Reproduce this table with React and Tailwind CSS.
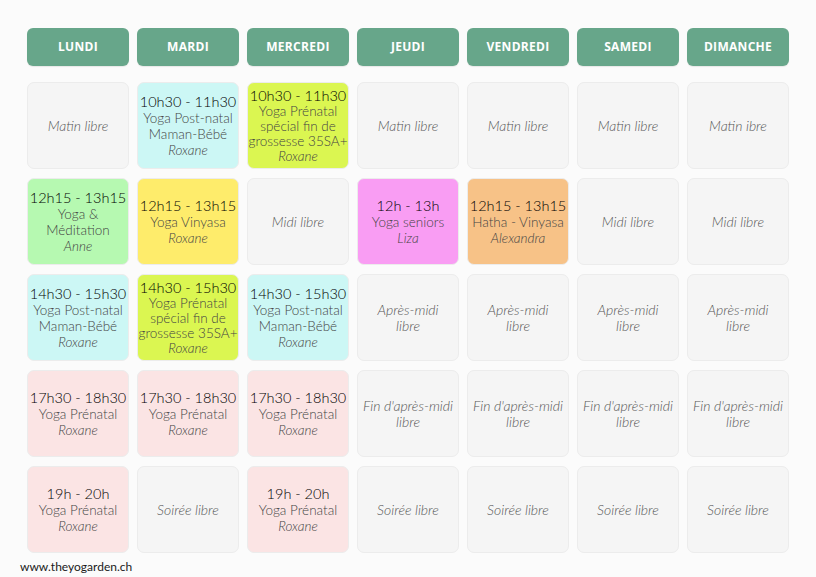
const DAYS = ["LUNDI", "MARDI", "MERCREDI", "JEUDI", "VENDREDI", "SAMEDI", "DIMANCHE"];

const free = (...t) => ({ free: t });

const cyanPost = (t) => ({ bg: "bg-[#ccf7f5]", time: t, lines: ["Yoga Post-natal", "Maman-Bébé"], who: "Roxane" });
const limePre = (t) => ({ bg: "bg-[#dbf651]", time: t, lines: ["Yoga Prénatal", "spécial fin de", "grossesse 35SA+"], who: "Roxane", tight: true });
const pinkPre = (t) => ({ bg: "bg-[#fbe4e4]", time: t, lines: ["Yoga Prénatal"], who: "Roxane" });

const AM = () => free("Après-midi", "libre");
const FAM = () => free("Fin d'après-midi", "libre");

const ROWS = [
  [free("Matin libre"), cyanPost("10h30 - 11h30"), limePre("10h30 - 11h30"), free("Matin libre"), free("Matin libre"), free("Matin libre"), free("Matin ibre")],
  [
    { bg: "bg-[#b6f9b1]", time: "12h15 - 13h15", lines: ["Yoga &", "Méditation"], who: "Anne" },
    { bg: "bg-[#feec6b]", time: "12h15 - 13h15", lines: ["Yoga Vinyasa"], who: "Roxane" },
    free("Midi libre"),
    { bg: "bg-[#f99df3]", time: "12h - 13h", lines: ["Yoga seniors"], who: "Liza" },
    { bg: "bg-[#f7c287]", time: "12h15 - 13h15", lines: ["Hatha - Vinyasa"], who: "Alexandra" },
    free("Midi libre"),
    free("Midi libre"),
  ],
  [cyanPost("14h30 - 15h30"), limePre("14h30 - 15h30"), cyanPost("14h30 - 15h30"), AM(), AM(), AM(), AM()],
  [pinkPre("17h30 - 18h30"), pinkPre("17h30 - 18h30"), pinkPre("17h30 - 18h30"), FAM(), FAM(), FAM(), FAM()],
  [pinkPre("19h - 20h"), free("Soirée libre"), pinkPre("19h - 20h"), free("Soirée libre"), free("Soirée libre"), free("Soirée libre"), free("Soirée libre")],
];

function Cell({ c }) {
  if (c.free) {
    return (
      <div className="h-[87px] rounded-[7px] bg-[#f5f5f5] border border-[#ececec] flex flex-col items-center justify-center text-center">
        {c.free.map((l) => (
          <span key={l} className="whitespace-nowrap italic font-light text-[14px] leading-[16px] text-[#555]">{l}</span>
        ))}
      </div>
    );
  }
  const lh = c.tight ? "leading-[15px]" : "leading-[16px]";
  return (
    <div className={`h-[87px] rounded-[7px] border border-[#ececec] flex flex-col items-center justify-center text-center ${c.bg}`}>
      <div className="whitespace-nowrap text-[14.5px] leading-[17px] text-black font-light">{c.time}</div>
      {c.lines.map((l) => (
        <div key={l} className={`whitespace-nowrap font-light text-[13.5px] text-[#444] ${lh}`}>{l}</div>
      ))}
      <div className={`italic font-light text-[13.5px] text-[#444] ${lh}`}>{c.who}</div>
    </div>
  );
}

export default function App() {
  return (
    <div className="w-[816px] h-[577px] bg-[#fbfbfb] font-['Lato',sans-serif] relative overflow-hidden">
      <div className="ml-[27px] pt-[28px] w-[762px]">
        <div className="grid grid-cols-7 gap-x-[8px]">
          {DAYS.map((d) => (
            <div key={d} className="h-[38px] rounded-[6px] bg-[#67a68a] flex items-center justify-center shadow-[0_1px_1px_rgba(0,0,0,0.08)]">
              <span className="text-white text-[12px] font-bold tracking-[0.3px] font-['Open_Sans',sans-serif]">{d}</span>
            </div>
          ))}
        </div>
        <div className="mt-[16px] grid grid-cols-7 gap-x-[8px] gap-y-[9px]">
          {ROWS.flat().map((c, i) => (
            <Cell key={i} c={c} />
          ))}
        </div>
      </div>
      <div className="absolute left-[20px] top-[558px] text-[12px] text-[#1a1a1a] font-['Lato',sans-serif]">www.theyogarden.ch</div>
    </div>
  );
}
